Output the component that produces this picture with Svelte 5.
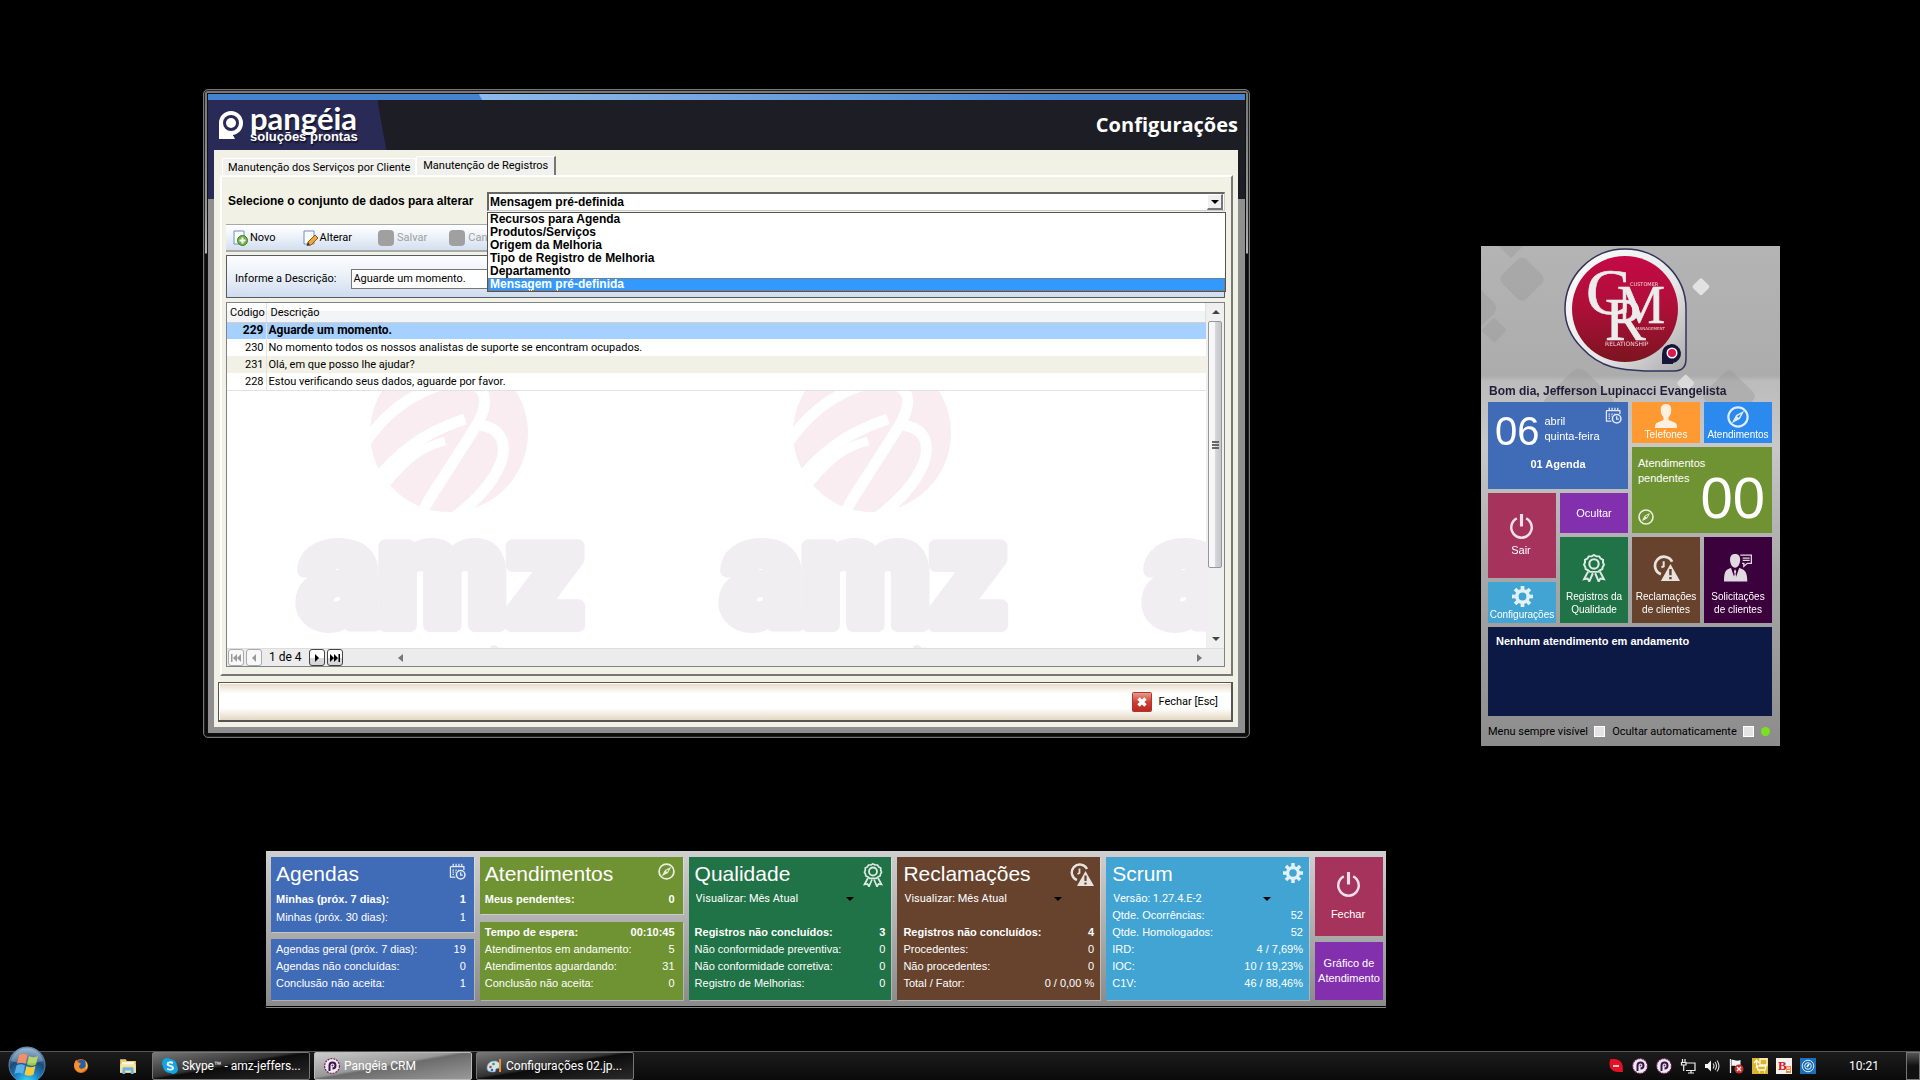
<script>
  const datasets = [
    'Recursos para Agenda',
    'Produtos/Serviços',
    'Origem da Melhoria',
    'Tipo de Registro de Melhoria',
    'Departamento',
    'Mensagem pré-definida'
  ];
  let dataset = $state('Mensagem pré-definida');
  let description = $state('Aguarde um momento.');

  const records = [
    [229, 'Aguarde um momento.'],
    [230, 'No momento todos os nossos analistas de suporte se encontram ocupados.'],
    [231, 'Olá, em que posso lhe ajudar?'],
    [228, 'Estou verificando seus dados, aguarde por favor.']
  ];

  const cards = [
    {
      title: 'Agendas', icon: 'calendar', color: 'blue',
      top: [['Minhas (próx. 7 dias):', '1', true], ['Minhas (próx. 30 dias):', '1']],
      bottom: [['Agendas geral (próx. 7 dias):', '19'], ['Agendas não concluídas:', '0'], ['Conclusão não aceita:', '1']]
    },
    {
      title: 'Atendimentos', icon: 'compass', color: 'olive',
      top: [['Meus pendentes:', '0', true]],
      bottom: [['Tempo de espera:', '00:10:45', true], ['Atendimentos em andamento:', '5'], ['Atendimentos aguardando:', '31'], ['Conclusão não aceita:', '0']]
    },
    {
      title: 'Qualidade', icon: 'ribbon', color: 'green', select: 'Visualizar: Mês Atual',
      bottom: [['Registros não concluídos:', '3', true], ['Não conformidade preventiva:', '0'], ['Não conformidade corretiva:', '0'], ['Registro de Melhorias:', '0']]
    },
    {
      title: 'Reclamações', icon: 'warning', color: 'brown', select: 'Visualizar: Mês Atual',
      bottom: [['Registros não concluídos:', '4', true], ['Procedentes:', '0'], ['Não procedentes:', '0'], ['Total / Fator:', '0 / 0,00 %']]
    },
    {
      title: 'Scrum', icon: 'gear', color: 'sky', select: 'Versão: 1.27.4.E-2',
      bottom: [['Qtde. Ocorrências:', '52'], ['Qtde. Homologados:', '52'], ['IRD:', '4 / 7,69%'], ['IOC:', '10 / 19,23%'], ['C1V:', '46 / 88,46%']]
    }
  ];

  const tasks = [
    { icon: 'skype', label: 'Skype™ - amz-jeffers...' },
    { icon: 'pangeia', label: 'Pangéia CRM', active: true },
    { icon: 'paint', label: 'Configurações 02.jp...' }
  ];
  const tray = ['blocked', 'pangeia', 'pangeia', 'network', 'volume', 'flag', 'cart', 'bitb', 'radar'];
  const teeth = [0, 45, 90, 135, 180, 225, 270, 315];
</script>

{#snippet icon(name, size)}
  <svg class="icon" width={size} height={size} viewBox="0 0 24 24" fill="none" stroke="currentColor" stroke-width="2" aria-hidden="true">
    {#if name === 'calendar'}
      <path d="M9 20H2V5M2 5h19v5M6 1v5M10 1v5M14 1v5M18 1v5" stroke-width="1.8" />
      <path d="M5 10h2M5 13h2M5 16h2M9 10h2M9 13h1M13 10h1" stroke-width="1.8" />
      <circle cx="16.500" cy="16.500" r="6" stroke-width="2.200" />
      <path d="M16.500 13v4h3" stroke-width="1.800" />
    {:else if name === 'compass'}
      <circle cx="12" cy="12" r="10.500" stroke-width="2.400" />
      <path d="M17 7l-3.500 6.500L7 17l3.500-6.500z" stroke-width="1.500" />
      <path d="M7 17l3.500-6.500 3 3z" fill="currentColor" stroke="none" />
    {:else if name === 'ribbon'}
      <path d="M12 1l2.300 1.400 2.700 0 1.300 2.300 2.300 1.300 0 2.700L21.500 11l-1.200 2.300-.4 2.200-2.400 1.200-1.800 1.600H8.300l-1.800-1.600-2.400-1.200-.4-2.200L2.500 11l.9-2.300 0-2.700 2.300-1.300L7 2.400l2.700 0z" stroke-width="1.900" transform="matrix(.9 0 0 .84 1.2 0)" />
      <circle cx="12" cy="8.500" r="4" stroke-width="1.800" />
      <path d="M7 15l-3.500 6.500 3-.5 1.500 2.500 3-7M17 15l3.500 6.500-3-.5-1.500 2.500-3-7" stroke-width="1.700" />
    {:else if name === 'warning'}
      <path d="M7 17A8 8 0 1 1 17 6" stroke-width="2.400" />
      <path d="M9.500 5.500V10l-2 1" stroke-width="1.800" />
      <path d="M15.500 8L24 23H7z" fill="currentColor" stroke="none" />
      <path class="cut" d="M15.500 12.500v5.500M15.500 19.500v2" stroke-width="2.200" />
    {:else if name === 'person'}
      <g fill="currentColor" stroke="none">
        <path d="M12 0c4 0 5.500 3 5.200 6.500C17 10 15.500 14 12 14S7 10 6.800 6.500C6.500 3 8 0 12 0z" />
        <path d="M9.500 12h5v4l6 2.500c2 1 2.500 2.500 2.500 5.500H1c0-3 .5-4.500 2.500-5.500l6-2.500z" />
      </g>
    {:else if name === 'power'}
      <path d="M7.500 4.200a9.800 9.800 0 1 0 9 0" stroke-width="2.400" />
      <path d="M12 0v12" stroke-width="3" />
    {:else if name === 'gear'}
      <circle cx="12" cy="12" r="6.500" stroke-width="4" />
      {#each teeth as a}
        <path d="M12 0v5" stroke-width="4.200" transform="rotate({a} 12 12)" />
      {/each}
    {:else if name === 'client'}
      <g fill="currentColor" stroke="none">
        <path d="M9.500 0c3.300 0 4.500 2.200 4.300 5.500-.2 3-1.800 6.200-4.300 6.200S5.400 8.500 5.200 5.500C5 2.200 6.200 0 9.500 0z" />
        <path d="M6 12l3.500 10L13 12c4 1.500 7 2 7 11.500H0C0 14 2 13.500 6 12z" />
        <path d="M9.500 13l1 2-.6 2 .8 4-1.200 2-1.200-2 .8-4-.6-2z" />
      </g>
      <path d="M14 1h9.500v7H20l-3 2.500V8h-1.500M16 3.500h6M16 5.500h6" stroke-width="1.200" />
    {/if}
  </svg>
{/snippet}

{#snippet appIcon(name, size)}
  <svg class="icon" width={size} height={size} viewBox="0 0 16 16" aria-hidden="true">
    {#if name === 'skype'}
      <circle cx="5" cy="5" r="5" fill="#12a5e8" /><circle cx="11" cy="11" r="5" fill="#12a5e8" /><circle cx="8" cy="8" r="7" fill="#12a5e8" />
      <path d="M10.800 5.200C9 3.700 5.500 4 5.500 6c0 2.500 5.500 1.400 5.500 4 0 2-3.800 2.300-5.800.6" fill="none" stroke="#fff" stroke-width="1.800" />
    {:else if name === 'pangeia'}
      <circle cx="8" cy="8" r="7.400" fill="#f4e9f2" stroke="#6b2350" stroke-width="1.200" stroke-dasharray="2 1" />
      <path d="M5.500 13V7.500a3 3 0 1 1 3 3" fill="none" stroke="#2b1b4d" stroke-width="2" /><circle cx="8.500" cy="7.500" r="1" fill="#c8174f" />
    {:else if name === 'paint'}
      <path d="M1 10c0-4 3-7 7-7s6 2 6 5-3 2-4 3 1 3-3 3-6-1-6-4z" fill="#cfe6f3" stroke="#6f93ab" stroke-width=".6" />
      <circle cx="4.500" cy="9" r="1.300" fill="#d63b2c" /><circle cx="7.500" cy="6" r="1.300" fill="#3e9c3a" /><circle cx="6" cy="12" r="1.300" fill="#2c68c4" />
      <path d="M14 1v13" stroke="#e8902a" stroke-width="2" />
    {:else if name === 'firefox'}
      <circle cx="8" cy="8" r="7" fill="#e5601c" /><circle cx="8.800" cy="6.500" r="4.800" fill="#2a5da8" />
      <path d="M1.500 5C2 3 3 2 3.500 1.800L4 4c2 0 3 1 4 2-1 1-2 1-2 3 1 3 5 2 7-1 0 5-4 7-7 6S0 9 1.500 5z" fill="#f5902a" />
      <path d="M12 2.500c2.500 2 3 5 2 8l-1.500 1C13 8 13 5 12 2.500z" fill="#ffc83d" />
    {:else if name === 'explorer'}
      <path d="M1 2h5l1 1.500h8V14H1z" fill="#e9cf7c" /><path d="M2.500 4.500h11V8h-11z" fill="#fff7d6" />
      <path d="M1 6.500h14V14H1z" fill="#f5e3a0" /><path d="M3 15V10.500q0-1.500 1.500-1.500h7q1.500 0 1.500 1.500V15h-2.500v-3h-5v3z" fill="#6db4e2" />
    {:else if name === 'blocked'}
      <path d="M3 2h3q5 0 7 4 1 2 1 7h-3q-6 0-8-4-1-2 0-7z" fill="#e31226" stroke="#e31226" stroke-width="2" stroke-linejoin="round" /><path d="M5 8h6" stroke="#fff" stroke-width="1.500" />
    {:else if name === 'network'}
      <path d="M5.500 5H15v7.500H6M8 15h6M11 12.500V15M2.500 1v3M5 1v3M1.500 4.500h4.500v2.500H1.500zM3.700 7v6" fill="none" stroke="#eee" stroke-width="1.200" />
    {:else if name === 'volume'}
      <path d="M1 6h2.500L7 2.500v11L3.500 10H1z" fill="#f4f4f4" /><path d="M9 5.500q2 2.500 0 5M11 4q3 4 0 8M13 2.500q4 5.500 0 11" fill="none" stroke="#ddd" stroke-width="1.100" />
    {:else if name === 'flag'}
      <path d="M2.500 1v14" stroke="#eee" stroke-width="1.300" /><path d="M3.500 2c3-1 4 2 9 0v6c-4 1-6-1-9 0z" fill="#f4f4f4" />
      <circle cx="11" cy="11" r="4.500" fill="#cf2a27" /><path d="M9 9l4 4M13 9l-4 4" stroke="#fff" stroke-width="1.400" />
    {:else if name === 'cart'}
      <path d="M0 0h16v16H0z" fill="#d9b62d" /><path d="M8 1h7v6H8zM5 8l1 4h7l1-4zM7 14h1M12 14h1M2 5l2.500-3L7 5M4.500 3v7" fill="none" stroke="#fff8dc" stroke-width="1.300" />
    {:else if name === 'bitb'}
      <path d="M0 0h16v16H0z" fill="#f7f1ee" /><text x="2" y="12" font-size="13" font-weight="700" font-family="Liberation Serif, serif" fill="#d3202a">B</text>
      <path d="M10 8h5v7h-5z" fill="#f08a4a" /><path d="M11 10h3M11 12.500h3" stroke="#fff" />
    {:else if name === 'radar'}
      <path d="M0 0h16v16H0z" fill="#1d6fb8" /><circle cx="8" cy="8" r="5.800" fill="none" stroke="#d5ebfb" /><circle cx="8" cy="8" r="3.300" fill="none" stroke="#d5ebfb" /><path d="M7 9l2-3" stroke="#fff" stroke-width="1.600" />
    {/if}
  </svg>
{/snippet}

{#snippet rows(list)}
  <dl>
    {#each list as [label, value, strong]}
      <div class="row" class:strong><dt>{label}</dt><dd>{value}</dd></div>
    {/each}
  </dl>
{/snippet}

<div class="desktop">
  <section class="window" aria-label="Configurações">
    <div class="shell">
      <div class="stripe"></div>
      <header>
        <div class="brand">
          <svg width="26" height="30" viewBox="0 0 26 30" aria-hidden="true">
            <path d="M1 29V13A12 12 0 0 1 25 13c0 6-4 11-10 12l2 4z" fill="#fff" />
            <circle cx="13" cy="13" r="8" fill="#2a2a56" /><circle cx="13" cy="13" r="5" fill="#fff" />
            <path d="M15 25q2 1 3 4" stroke="#2a2a56" fill="none" />
          </svg>
          <div class="brand-text"><strong>pangéia</strong><span>soluções prontas</span></div>
        </div>
        <h1>Configurações</h1>
      </header>

      <div class="content">
        <div class="tabs" role="tablist">
          <button role="tab" aria-selected="false">Manutenção dos Serviços por Cliente</button>
          <button role="tab" aria-selected="true" class="current">Manutenção de Registros</button>
        </div>

        <div class="tab-panel" role="tabpanel">
          <div class="picker">
            <label for="dataset">Selecione o conjunto de dados para alterar</label>
            <div class="combo">
              <select id="dataset" bind:value={dataset}>
                {#each datasets as d}<option>{d}</option>{/each}
              </select>
              <span class="combo-arrow"></span>
              <ul class="options" role="listbox" aria-label="Conjunto de dados">
                {#each datasets as d}
                  <li role="option" aria-selected={d === dataset} class:selected={d === dataset}>{d}</li>
                {/each}
              </ul>
            </div>
          </div>

          <div class="toolbar">
            <button>
              <svg width="16" height="16" viewBox="0 0 16 16" aria-hidden="true"><path d="M2 1h10v13H2z" fill="#fff" stroke="#6c8cc4" /><circle cx="10.500" cy="10.500" r="5" fill="#6cb544" stroke="#3f7f26" /><path d="M10.500 7.500v6M7.500 10.500h6" stroke="#fff" stroke-width="2" /></svg>
              Novo
            </button>
            <button>
              <svg width="16" height="16" viewBox="0 0 16 16" aria-hidden="true"><path d="M2 1h10v13H2z" fill="#fff" stroke="#6c8cc4" /><path d="M6 12l7-7 3 3-7 7-4 1z" fill="#f0a63c" stroke="#8a5a1a" /><path d="M5 15.500l1-3 2 2z" fill="#333" /></svg>
              Alterar
            </button>
            <button disabled><i class="blank"></i>Salvar</button>
            <button disabled><i class="blank"></i>Cancelar</button>
          </div>

          <div class="form">
            <label for="description">Informe a Descrição:</label>
            <input id="description" type="text" bind:value={description} />
          </div>

          <div class="grid">
            <div class="grid-body">
              <svg class="watermark" width="100%" height="100%" aria-hidden="true">
                <defs>
                  <pattern id="mark" width="423" height="400" patternUnits="userSpaceOnUse">
                    <circle cx="222" cy="130" r="79" fill="#f9edf1" />
                    <g fill="none" stroke="#fff">
                      <path d="M138 140C165 100 205 78 238 80c30 4 20 30 8 48L205 192q-12 18-12 32" stroke-width="11" />
                      <path d="M150 176c18-22 42-45 88-60" stroke-width="11" />
                      <path d="M252 122c32 4 26 32 18 46-10 20-30 38-58 58" stroke-width="11" />
                      <path d="M156 184c26-32 40-40 62-46" stroke-width="9" />
                    </g>
                    <text x="72" y="322" font-family="Roboto, sans-serif" font-weight="900" font-size="149" fill="#f0eef1" stroke="#f0eef1" stroke-width="14" stroke-linejoin="round">amz</text>
                    <path d="M264 345q3-3 6 0t6 0" fill="none" stroke="#f0eef1" stroke-width="3" />
                  </pattern>
                </defs>
                <rect width="100%" height="100%" fill="url(#mark)" />
              </svg>
              <table>
                <thead><tr><th scope="col">Código</th><th scope="col">Descrição</th></tr></thead>
                <tbody>
                  {#each records as [code, text], i}
                    <tr class:active={i === 0}><td>{code}</td><td>{text}</td></tr>
                  {/each}
                </tbody>
              </table>
            </div>
            <div class="vscroll">
              <span class="up"></span>
              <div class="track"><div class="thumb"><i></i><i></i><i></i></div></div>
              <span class="down"></span>
            </div>
            <div class="pager">
              <button disabled aria-label="Primeiro"><svg width="10" height="8" viewBox="0 0 10 8"><path d="M0 0h1.500v8H0zM6 0v8L2 4zM10 0v8L6 4z" /></svg></button>
              <button disabled aria-label="Anterior"><svg width="10" height="8" viewBox="0 0 10 8"><path d="M7 0v8L3 4z" /></svg></button>
              <span>1 de 4</span>
              <button aria-label="Próximo"><svg width="10" height="8" viewBox="0 0 10 8"><path d="M3 0v8l4-4z" /></svg></button>
              <button aria-label="Último"><svg width="10" height="8" viewBox="0 0 10 8"><path d="M0 0v8l4-4zM4 0v8l4-4zM8.500 0H10v8H8.500z" /></svg></button>
              <div class="hscroll"><i class="left"></i><i class="right"></i></div>
            </div>
          </div>
        </div>

        <footer>
          <button class="close">
            <svg width="20" height="20" viewBox="0 0 20 20" aria-hidden="true"><defs><linearGradient id="red" x2="0" y2="1"><stop stop-color="#e8a090" /><stop offset=".5" stop-color="#cf3f35" /><stop offset="1" stop-color="#b8281f" /></linearGradient></defs><rect x=".5" y=".5" width="19" height="19" rx="1" fill="url(#red)" stroke="#b0352c" /><path d="M6.500 6.500l7 7M13.500 6.500l-7 7" stroke="#fff" stroke-width="3.400" /></svg>
            Fechar [Esc]
          </button>
        </footer>
      </div>
    </div>
  </section>

  <aside class="crm">
    <svg class="shapes" width="100%" height="100%" viewBox="0 0 299 499" preserveAspectRatio="none" aria-hidden="true">
      <g fill="#999" opacity=".4">
        <rect x="24" y="16" width="34" height="34" rx="6" transform="rotate(45 41 33)" />
        <rect x="-30" y="42" width="40" height="40" rx="8" transform="rotate(45 -10 62)" />
        <rect x="4" y="75" width="18" height="18" rx="2" transform="rotate(45 13 84)" />
        <rect x="70" y="130" width="56" height="56" rx="10" transform="rotate(45 98 158)" />
        <rect x="228" y="130" width="40" height="40" rx="6" transform="rotate(45 248 150)" />
        <rect x="20" y="-12" width="20" height="20" transform="rotate(45 30 -2)" />
      </g>
      <rect x="214" y="34" width="13" height="13" rx="2" fill="#e2e2e2" transform="rotate(45 220 40)" />
      <rect x="198" y="130" width="13" height="13" rx="2" fill="#dadada" transform="rotate(45 204 137)" />
    </svg>
    <div class="crm-logo">
      <svg width="124" height="124" viewBox="0 0 124 124" role="img" aria-label="CRM Customer Relationship Management">
        <defs>
          <linearGradient id="ball" x2="0" y2="1"><stop stop-color="#c40a46" /><stop offset=".45" stop-color="#b00f3a" /><stop offset="1" stop-color="#7c1420" /></linearGradient>
          <linearGradient id="rim" x2="1" y2="1"><stop stop-color="#fff" /><stop offset=".6" stop-color="#e6e6e6" /><stop offset="1" stop-color="#a8a8a8" /></linearGradient>
        </defs>
        <path d="M61 1C95 1 122 28 122 61v50q0 12-12 12H84C60 122 38 122 18 100 6 88 1 75 1 61 1 28 28 1 61 1z" fill="url(#rim)" stroke="#34335c" stroke-width="1.500" />
        <circle cx="61" cy="61" r="53" fill="url(#ball)" />
        <g font-family="Liberation Serif, serif" fill="#ececec" stroke="#ececec" stroke-width=".6">
          <text x="22" y="66" font-size="66">C</text>
          <text x="53" y="75" font-size="54">M</text>
          <text x="41" y="92" font-size="61">R</text>
        </g>
        <g font-family="DejaVu Sans, sans-serif" fill="#f3d3da">
          <text x="66" y="38" font-size="5">CUSTOMER</text>
          <text x="72" y="82" font-size="4">MANAGEMENT</text>
          <text x="41" y="98" font-size="6">RELATIONSHIP</text>
        </g>
        <path d="M98 116v-10a9.500 9.500 0 1 1 11 9v1z" fill="#17153c" />
        <circle cx="108" cy="105" r="5.500" fill="#fff" /><circle cx="108" cy="105" r="4" fill="#d81b4f" />
      </svg>
    </div>
    <p class="greeting">Bom dia, Jefferson Lupinacci Evangelista</p>
    <div class="tiles">
      <button class="tile agenda blue">
        <span class="date"><b>06</b><span>abril<br />quinta-feira</span>{@render icon('calendar', 17)}</span>
        <strong>01 Agenda</strong>
      </button>
      <button class="tile small orange">{@render icon('person', 24)}Telefones</button>
      <button class="tile small azure">{@render icon('compass', 22)}Atendimentos</button>
      <button class="tile pending olive">
        <span class="words">Atendimentos<br />pendentes</span>
        {@render icon('compass', 16)}
        <b>00</b>
      </button>
      <button class="tile tall wine">{@render icon('power', 25)}Sair</button>
      <button class="tile purple">Ocultar</button>
      <button class="tile tall low green">{@render icon('ribbon', 28)}<span>Registros da<br />Qualidade</span></button>
      <button class="tile tall low brown">{@render icon('warning', 27)}<span>Reclamações<br />de clientes</span></button>
      <button class="tile tall low plum">{@render icon('client', 28)}<span>Solicitações<br />de clientes</span></button>
      <button class="tile small config sky">{@render icon('gear', 21)}Configurações</button>
    </div>
    <div class="current-call">Nenhum atendimento em andamento</div>
    <div class="switches">
      <label>Menu sempre visível <input type="checkbox" /></label>
      <label>Ocultar automaticamente <input type="checkbox" /></label>
      <span class="led"></span>
    </div>
  </aside>

  <section class="dashboard">
    {#each cards as c}
      <article class:split={c.top}>
        <div class="card {c.color}">
          <div class="card-head"><h2>{c.title}</h2>{@render icon(c.icon, c.icon === 'ribbon' || c.icon === 'warning' ? 24 : c.icon === 'gear' ? 20 : 17)}</div>
          {#if c.select}
            <div class="card-select"><select aria-label={c.title}><option>{c.select}</option></select></div>
            {@render rows(c.bottom)}
          {:else}
            {@render rows(c.top)}
          {/if}
        </div>
        {#if c.top}
          <div class="card {c.color}">{@render rows(c.bottom)}</div>
        {/if}
      </article>
    {/each}
    <div class="actions">
      <button class="tile wine">{@render icon('power', 25)}Fechar</button>
      <button class="tile purple"><span>Gráfico de<br />Atendimento</span></button>
    </div>
  </section>

  <nav class="taskbar">
    <button class="start" aria-label="Iniciar">
      <svg width="38" height="38" viewBox="0 0 38 38" aria-hidden="true">
        <defs>
          <radialGradient id="orb" cy="1" r="1"><stop stop-color="#3fe0ff" /><stop offset=".35" stop-color="#1b86c8" /><stop offset=".65" stop-color="#1d4a7a" /><stop offset="1" stop-color="#86aac8" /></radialGradient>
        </defs>
        <circle cx="19" cy="19" r="18" fill="url(#orb)" stroke="#5b86a8" />
        <path d="M11 9q4-2.500 8.500 0l-2 9q-4-2.500-8.500 0z" fill="#ef6a35" /><path d="M21 10q4 2.500 9 0l-2 8.500q-4 2.500-9 0z" fill="#9ccb3c" />
        <path d="M8.500 19.500q4-2.500 8.500 0l-2 8.500q-4-2.500-8.500 0z" fill="#58b1ea" /><path d="M18.500 20q4 2.500 9 0l-2 8.500q-4 2.500-9 0z" fill="#fbca3b" />
        <path d="M3 15A16.500 16.500 0 0 1 35 15Q19 20 3 15z" fill="#fff" opacity=".25" />
      </svg>
    </button>
    <button class="quick" aria-label="Firefox">{@render appIcon('firefox', 16)}</button>
    <button class="quick" aria-label="Explorador">{@render appIcon('explorer', 18)}</button>
    <div class="tasks">
      {#each tasks as t}
        <button class:active={t.active}>{@render appIcon(t.icon, 16)}{t.label}</button>
      {/each}
    </div>
    <div class="tray">{#each tray as t}{@render appIcon(t, 16)}{/each}</div>
    <time>10:21</time>
    <button class="peek" aria-label="Mostrar área de trabalho"></button>
  </nav>
</div>

<style>
  :global(body) { background: #000; overflow: hidden; }
  .desktop { position: relative; min-height: 100vh; background: #000; font: 11px/13px "Liberation Sans", Arial, sans-serif; color: #000; }
  .desktop :global(*) { box-sizing: border-box; }
  button { font: inherit; color: inherit; border: 0; padding: 0; background: none; }
  h1, h2, p, dl, dd, ul { margin: 0; padding: 0; }
  .icon { flex: none; display: block; opacity: .85; }

  /* Settings window */
  .window { position: absolute; left: 203px; right: 670px; top: 89px; padding: 4px; border: 1px solid #777; border-radius: 5px;
    background: linear-gradient(#777 0, #999 120px, #b5b5b5 163px, #0b0b0b 164px); box-shadow: inset 0 0 0 1px #222; }
  .shell { padding: 0 7px 6px 6px; outline: 1px solid #111;
    background: linear-gradient(90deg, #2a2a56 50%, #1c1d25 50%) 0 0 / 100% 105px no-repeat #8f8f8f; }
  .stripe { height: 6px; margin: 0 -7px 0 -6px; background: linear-gradient(60deg, transparent 237px, #8fb9ea 238px, #7fabe2 380px, transparent 740px), #4583cf; }
  header { display: flex; justify-content: space-between; align-items: center; height: 50px; margin: 0 -7px 0 -6px; padding: 0 7px 0 10px;
    background: linear-gradient(80deg, #2a2a56 175px, #1c1d25 176px); color: #fff; }
  .brand { display: flex; gap: 6px; align-items: center; text-shadow: 1px 2px 1px #0008; }
  .brand-text { display: flex; flex-direction: column; }
  .brand-text strong { font: 700 31px/24px Lato, sans-serif; }
  .brand-text span { font: 700 13px/14px "Liberation Sans", sans-serif; }
  h1 { font: 700 20px/26px "Open Sans", sans-serif; }
  .content { padding: 6px 5px 5px 4px; background: #f1f1e5; font-family: Roboto, sans-serif; }
  .tabs { display: flex; align-items: flex-end; padding-left: 4px; }
  .tabs button { height: 17px; padding: 0 5px; background: #f0f0ec; border: 1px solid #fff; border-bottom: 0; }
  .tabs .current { height: 19px; padding: 0 6px 2px; border-right: 2px solid #777; }
  .tab-panel { margin: 0 0 6px 2px; padding: 15px 6px 7px 4px; border: 2px solid #fff; border-right-color: #777; border-bottom-color: #777; }
  .picker { display: flex; align-items: center; justify-content: space-between; }
  .picker label { padding-left: 2px; font: 700 12px/15px "Liberation Sans", sans-serif; }
  .combo { position: relative; width: 738px; }
  .combo select { display: block; width: 100%; height: 19px; padding: 0 1px; appearance: none; border: 1px solid #ccc; border-top: 2px solid #666; border-left: 2px solid #666; border-radius: 0; background: #fff; font: 700 12px/15px "Liberation Sans", sans-serif; }
  .combo-arrow { position: absolute; right: 2px; top: 2px; width: 16px; height: 16px; background: #f0f0f0; border: 1px solid #fff; border-right: 2px solid #777; border-bottom: 2px solid #777; pointer-events: none; }
  .combo-arrow::after { content: ''; position: absolute; left: 3px; top: 5px; border: 4px solid transparent; border-top-color: #000; border-bottom: 0; }
  .options { position: absolute; z-index: 2; left: 0; right: -1px; top: 20px; border: 1px solid #555; background: #fff; list-style: none; font: 700 12px/13px "Liberation Sans", sans-serif; }
  .options li { height: 13px; padding-left: 2px; overflow: hidden; }
  .options .selected { background: #3399ff; color: #fff; outline: 1px dotted #a86a28; outline-offset: -1px; }
  .toolbar { display: flex; align-items: center; height: 28px; margin-top: 13px; padding-left: 6px; gap: 26px; border: 1px solid #aaa; border-width: 1px 0 2px; background: linear-gradient(#fff, #f0f4fa 40%, #d3dff0); }
  .toolbar button { display: flex; align-items: center; gap: 2px; }
  .toolbar button:disabled { color: #a0a0a0; gap: 3px; margin-right: -4px; }
  .blank { width: 16px; height: 16px; border-radius: 4px; background: #a0a0a0; }
  .form { display: flex; align-items: center; gap: 15px; height: 43px; margin-top: 3px; padding: 4px 8px 0; border: 1px solid #555c66; background: linear-gradient(#fcfdff, #eaf0f8 50%, #cfdcf0); }
  .form input { flex: 1; height: 20px; padding: 0 1px; border: 1px solid #777; font: inherit; background: #fff; }
  .grid { display: grid; grid-template-columns: 1fr 17px; margin-top: 4px; border: 1px solid #7d828c; background: #fff; }
  .grid-body { position: relative; min-height: 345px; overflow: hidden; border-right: 1px solid #eee; }
  .watermark { position: absolute; inset: 0; }
  table { position: relative; width: 100%; border-collapse: collapse; table-layout: fixed; }
  th { height: 19px; padding: 0 4px; text-align: left; font-weight: 400; background: linear-gradient(#fff 40%, #f3f4f5 41%); border-bottom: 1px solid #d0d0d0; border-right: 1px solid #e2e2e2; }
  th:first-child { width: 39px; padding: 0 3px; }
  td { height: 17px; padding: 0 2px; background: #fff; }
  td:first-child { text-align: right; border-right: 1px solid #e2e2e2; }
  tbody tr:nth-child(3) td { background: #f1f1e5; }
  tbody tr:last-child td { border-bottom: 1px solid #e2e2e2; }
  tbody tr.active td { background: #a6d0ff; font-weight: 700; font-size: 12px; }
  .vscroll { display: flex; flex-direction: column; align-items: center; background: #f0f0f0; }
  .up, .down { flex: none; height: 18px; display: flex; align-items: center; }
  .up::after, .down::after { content: ''; border: 4px solid transparent; }
  .up::after { border-bottom-color: #444; border-top: 0; }
  .down::after { border-top-color: #444; border-bottom: 0; }
  .track { flex: 1; width: 100%; padding: 0 2px 0 1px; }
  .thumb { height: 80%; display: flex; flex-direction: column; align-items: center; justify-content: center; gap: 1px; border: 1px solid #979797; border-radius: 2px; background: linear-gradient(90deg, #f7f7f7 45%, #d4d5d8 55%, #c6c7ca); }
  .thumb i { width: 7px; height: 2px; background: #666; }
  .pager { grid-column: 1 / -1; display: flex; align-items: center; height: 18px; padding: 0 22px 0 1px; gap: 2px; border-top: 1px solid #ddd; background: #ececec; }
  .pager button { display: grid; place-items: center; width: 16px; height: 17px; border: 1px solid #444; border-radius: 3px; background: linear-gradient(#fff 50%, #d8d8d8 51%); }
  .pager button:disabled { border-color: #aaa; background: #f8f8f8; fill: #999; }
  .pager span { padding: 0 5px; font-size: 12px; }
  .hscroll { flex: 1; display: flex; align-items: center; justify-content: space-between; padding-left: 53px; }
  .hscroll i { border: 4px solid transparent; }
  .hscroll .left { border-right: 5px solid #777; border-left: 0; }
  .hscroll .right { border-left: 5px solid #777; border-right: 0; }
  footer { display: flex; justify-content: flex-end; align-items: center; height: 40px; padding-right: 13px; border: 1px solid #555; border-width: 1px 2px 2px 1px; background: linear-gradient(#e4d8c4, #fff 28%, #fff 68%, #e4d8c2); box-shadow: inset 1px 1px #fff; }
  .close { display: flex; align-items: center; gap: 6px; }

  /* Tile colours */
  .blue { background: #406bb6; }
  .olive { background: #6f9333; }
  .green { background: #207346; }
  .brown { background: #67432d; }
  .sky { background: #41a4d2; }
  .wine { background: #a6335b; }
  .purple { background: #8230ae; }
  .plum { background: #3b013c; }
  .orange { background: #ff9a33; }
  .azure { background: #2c8aee; }
  .brown .cut { stroke: #67432d; }
  .blue, .olive, .green, .brown, .sky, .wine, .purple, .plum, .orange, .azure { color: #fff; }

  /* CRM panel */
  .crm { position: absolute; right: 140px; top: 246px; width: 299px; padding: 0 8px 8px 7px; overflow: hidden; background: linear-gradient(#b4b4b4, #acacac 26%, #bcbcbc 27%, #c8c8c8 40%, #a8a8a8 65%, #8c8c8c); }
  .shapes { position: absolute; inset: 0; }
  .crm-logo, .greeting, .tiles, .current-call, .switches { position: relative; }
  .crm-logo { display: flex; justify-content: center; height: 135px; padding: 2px 9px 0 0; }
  .greeting { height: 21px; padding-left: 1px; font-size: 12px; line-height: 21px; font-weight: 700; color: #211d38; white-space: nowrap; }
  .tiles { display: grid; grid-template-columns: repeat(4, 1fr); grid-template-rows: 41px 42px 40px 41px 41px; gap: 4px; }
  .tile { display: flex; flex-direction: column; align-items: center; justify-content: center; gap: 5px; text-align: center; }
  .agenda { grid-column: span 2; grid-row: span 2; justify-content: flex-start; gap: 3px; padding: 5px 7px; }
  .date { display: flex; width: 100%; gap: 5px; text-align: left; line-height: 15px; white-space: nowrap; }
  .date > span { flex: 1; padding-top: 7px; }
  .date b { font-weight: 400; font-size: 40px; line-height: 48px; }
  .small { gap: 1px; font-size: 10px; line-height: 12px; justify-content: flex-end; padding-bottom: 2px; }
  .pending { position: relative; grid-row: 2 / span 2; align-items: flex-start; justify-content: space-between; padding: 9px 6px 8px; line-height: 15px; text-align: left; grid-column: 3 / span 2; }
  .pending b { position: absolute; right: 7px; bottom: 5px; font-weight: 400; font-size: 58px; line-height: 60px; }
  .tall { grid-row: span 2; }
  .tile.wine { grid-row: 3 / span 2; padding-right: 2px; }
  .tile.low { grid-row: 4 / span 2; gap: 8px; justify-content: flex-end; padding-bottom: 7px; font-size: 10px; line-height: 13px; }
  .config { grid-column: 1; grid-row: 5; gap: 2px; }
  .current-call { min-height: 89px; margin-top: 4px; padding: 8px; background: #0c1944; color: #fff; font-weight: 700; }
  .switches { display: flex; align-items: center; justify-content: space-between; padding: 8px 2px 0 0; height: 22px; font-family: Roboto, sans-serif; }
  .switches label { display: flex; align-items: center; gap: 6px; }
  .switches input { appearance: none; width: 11px; height: 11px; margin: 0; background: #e4e4e4; border: 1px solid #fff; }
  .led { width: 9px; height: 9px; border-radius: 50%; background: #7be021; }

  /* Dashboard */
  .dashboard { position: absolute; left: 266px; right: 534px; bottom: 74px; display: grid; grid-template-columns: repeat(5, 1fr) 68px; gap: 6px; padding: 6px 3px 6px 5px; min-height: 155px; background: linear-gradient(#cfcfcf, #b4b4b4 40%, #8a8a8a); box-shadow: 0 1px #000, 0 2px #888; }
  article { display: flex; flex-direction: column; justify-content: space-between; gap: 6px; }
  .card { display: flex; flex-direction: column; padding: 3px 8px 7px 5px; box-shadow: 1px 1px #ffffff50; }
  .split .card:first-child { padding-bottom: 6px; }
  article:not(.split) .card { flex: 1; justify-content: space-between; }
  .split .card:last-child { padding-top: 2px; padding-bottom: 8px; }
  article:not(.split) .card { padding: 3px 6px 8px 6px; }
  .card-head { display: flex; justify-content: space-between; align-items: flex-start; height: 30px; }
  .card-head .icon { margin-top: 3px; }
  h2 { font: 400 21px/28px "Liberation Sans", sans-serif; }
  .row { display: flex; justify-content: space-between; line-height: 18px; }
  .card dl { display: flex; flex-direction: column; }
  .split .card:last-child .row, article:not(.split) .row { line-height: 17px; }
  .strong { font-weight: 700; }
  .card-select { position: relative; margin-bottom: auto; }
  .card-select select { display: block; width: 160px; height: 17px; padding: 0 1px; appearance: none; border: 0; background: transparent; color: #fff; font: 11px/17px Roboto, sans-serif; }
  .card-select::after { content: ''; position: absolute; left: 151px; top: 7px; border: 4px solid transparent; border-top-color: #000; border-bottom: 0; }
  .actions { display: grid; grid-template-rows: 79px 1fr; gap: 6px; }
  .actions .tile.wine { grid-row: 1; }
  .actions .tile { line-height: 15px; gap: 10px; }

  /* Taskbar */
  .taskbar { position: absolute; left: 0; right: 0; bottom: 0; display: flex; align-items: center; height: 29px; border-top: 1px solid #555; background: linear-gradient(#1c1c1c, #0a0a0a); color: #fff; font: 12px/15px Roboto, "Noto Sans", sans-serif; }
  .start { width: 38px; height: 34px; margin: -6px 24px 0 8px; overflow: hidden; }
  .quick { width: 22px; margin-right: 25px; display: grid; place-items: center; }
  .taskbar .icon { opacity: 1; }
  .tasks { display: flex; gap: 4px; margin-left: -12px; height: 100%; }
  .tasks button { display: flex; align-items: center; gap: 4px; width: 158px; padding: 0 9px; white-space: nowrap; border: 1px solid #777; border-radius: 2px; background: linear-gradient(170deg, #777, #333 45%, #0c0c0c 50%, #2a2a2a); }
  .tasks .active { border-color: #bbb; background: linear-gradient(170deg, #ccc, #999 45%, #6c6c6c 50%, #999); }
  .tray { display: flex; gap: 8px; margin-left: auto; }
  time { padding: 0 27px 0 33px; }
  .peek { width: 14px; height: 100%; border: 1px solid #777; background: linear-gradient(#555, #111 50%); }
</style>
